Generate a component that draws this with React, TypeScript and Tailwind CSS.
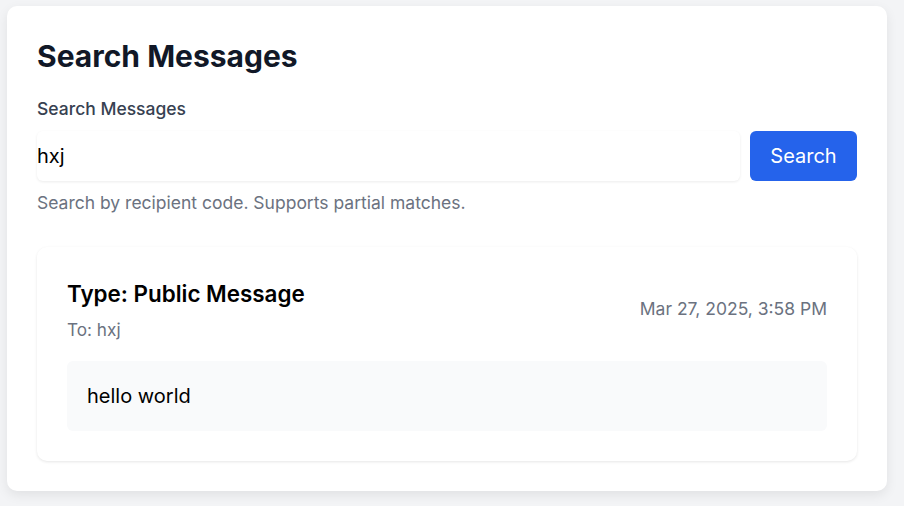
import React from "react";

export default function App() {
  return (
    <div className="min-h-[506px] bg-[#f3f4f6] pt-[6px] pl-[7px]" style={{ fontFamily: "Inter, 'Noto Sans', sans-serif" }}>
      <div className="w-[880px] rounded-[10px] bg-white p-[30px] shadow-[0_4px_12px_rgba(0,0,0,0.08)]">
        <h1 className="mb-[21px] text-[30px] font-bold leading-[40px] text-[#111827]">Search Messages</h1>
        <label className="block text-[17.5px] font-medium leading-[24px] text-[#374151]">Search Messages</label>
        <div className="mt-[10px] flex gap-[10px]">
          <div className="flex h-[50px] flex-1 items-center rounded-md bg-white shadow-[0_1px_3px_rgba(0,0,0,0.08)]">
            <span className="text-[20px] text-black">hxj</span>
          </div>
          <button className="h-[50px] w-[107px] rounded-md bg-[#2563eb] text-[20px] text-white">Search</button>
        </div>
        <p className="mt-[10px] text-[17.5px] leading-[24px] text-[#6b7280]">Search by recipient code. Supports partial matches.</p>
        <div className="mt-[32px] rounded-[10px] bg-white p-[30px] shadow-[0_1px_3px_rgba(0,0,0,0.1)]">
          <div className="flex items-center justify-between">
            <div>
              <h3 className="text-[22.4px] font-semibold leading-[34px] text-black">Type: Public Message</h3>
              <p className="mt-[7px] text-[17.2px] leading-[24px] text-[#6b7280]">To: hxj</p>
            </div>
            <span className="text-[17.5px] text-[#6b7280]">Mar 27, 2025, 3:58 PM</span>
          </div>
          <div className="mt-[19px] flex h-[70px] items-center rounded-md bg-[#f9fafb] px-5">
            <span className="text-[20px] text-black">hello world</span>
          </div>
        </div>
      </div>
    </div>
  );
}
